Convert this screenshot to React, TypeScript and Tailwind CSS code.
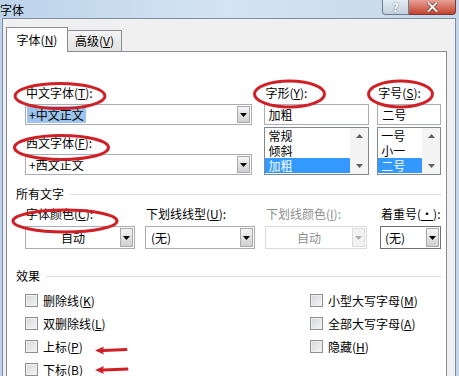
const cjk = "font-['Microsoft_YaHei','Noto_Sans_CJK_SC',sans-serif]"

function Arrow({ disabled = false }: { disabled?: boolean }) {
  return (
    <span
      className={
        disabled
          ? "flex h-full w-[13px] items-center justify-center border border-[#dcdcdc] bg-[#f2f2f2]"
          : "flex h-full w-[13px] items-center justify-center border border-[#a9a9a9] bg-linear-to-b from-[#f5f5f5] to-[#cfcfcf]"
      }
    >
      <svg width="7" height="4" viewBox="0 0 7 4">
        <path d="M0 0h7L3.5 4z" fill={disabled ? "#b0b0b0" : "#000"} />
      </svg>
    </span>
  )
}

function Label({ text, k, tail = ":", gray = false }: { text: string; k: string; tail?: string; gray?: boolean }) {
  return (
    <div className={`h-4 pl-px text-[12px] leading-4 ${gray ? "text-[#8d8d8d]" : "text-black"}`}>
      {text}(<u>{k}</u>){tail}
    </div>
  )
}

function Scroll() {
  return (
    <div className="flex w-[18px] flex-col items-center justify-between bg-[#f4f4f4] py-[6px]">
      <svg width="7" height="4" viewBox="0 0 7 4">
        <path d="M0 4h7L3.5 0z" fill="#606060" />
      </svg>
      <svg width="7" height="4" viewBox="0 0 7 4">
        <path d="M0 0h7L3.5 4z" fill="#606060" />
      </svg>
    </div>
  )
}

function ListBox({ items, sel }: { items: string[]; sel: number }) {
  return (
    <div className="mt-[2px] flex h-[48px] border border-[#828790] bg-white">
      <div className="flex flex-1 flex-col">
        {items.map((it, i) => (
          <div
            key={it}
            className={`flex h-[15px] items-center overflow-hidden pl-[3px] text-[12px] leading-[14px] ${i === sel ? "bg-[#3399ff] text-white" : "text-black"}`}
          >
            {it}
          </div>
        ))}
      </div>
      <Scroll />
    </div>
  )
}

function Check({ text, k }: { text: string; k: string }) {
  return (
    <div className="flex h-[23px] items-center">
      <span className="h-[13px] w-[13px] border border-[#8e8f8f] bg-linear-to-br from-[#d4d6d9] to-[#f6f6f6] shadow-[inset_0_0_0_1px_#f0f0f0]" />
      <span className="ml-[5px] text-[12px] leading-4 text-black">
        {text}(<u>{k}</u>)
      </span>
    </div>
  )
}

export default function App() {
  return (
    <div className={`relative flex h-[376px] w-[459px] flex-col overflow-hidden bg-linear-to-r from-[#bcd3ea] via-[#d5e4f3] to-[#c4d6e8] ${cjk}`}>
      <div className="flex h-[24px] items-start">
        <div className="mt-[2px] text-[12px] leading-4 text-black">字体</div>
        <div className="ml-auto mr-[3px] flex h-[15px]">
          <div className="flex w-[27px] items-center justify-center rounded-bl-[4px] border border-t-0 border-[#6e7f93] bg-linear-to-b from-[#e3ebf4] to-[#c2d0de] text-[11px] font-bold leading-none text-white [text-shadow:0_0_2px_#4a5a6c]">
            ?
          </div>
          <div className="flex w-[47px] items-center justify-center rounded-br-[4px] border border-l-0 border-t-0 border-[#7a3a34] bg-linear-to-b from-[#e5a096] to-[#c5402f]">
            <svg width="11" height="10" viewBox="0 0 11 10">
              <path d="M1.5 1 L9.5 9 M9.5 1 L1.5 9" stroke="#6a1a10" strokeWidth="3.2" strokeLinecap="square" />
              <path d="M1.5 1 L9.5 9 M9.5 1 L1.5 9" stroke="#fff" strokeWidth="2" strokeLinecap="square" />
            </svg>
          </div>
        </div>
      </div>

      <div className="ml-[2px] mr-[3px] flex-1 border border-b-0 border-[#7d8ea3] bg-[#f0f0f0] pl-[3px] pt-[8px]">
        <div className="flex h-[24px] items-end">
          <div className="relative z-10 -mb-px flex h-[25px] w-[62px] items-center justify-center border border-b-0 border-[#898c95] bg-white text-[12px] text-black">
            字体(<u>N</u>)
          </div>
          <div className="flex h-[21px] w-[54px] items-center justify-center border border-b-0 border-l-0 border-[#898c95] bg-linear-to-b from-[#f3f3f3] to-[#e3e3e3] text-[12px] text-black">
            高级(<u>V</u>)
          </div>
        </div>

        <div className="h-[400px] w-[441px] border border-[#898c95] bg-white pl-[9px] pr-[5px] pt-[33px]">
          <div className="ml-[9px] flex">
            <div className="w-[228px]">
              <Label text="中文字体" k="T" />
              <div className="mt-[3px] flex h-[21px] items-center border border-[#abadb3] bg-white pl-px pr-px">
                <span className="bg-[#9cc4ec] px-[2px] text-[12px] leading-[17px] text-black">+中文正文</span>
                <span className="ml-auto h-[19px] py-px">
                  <Arrow />
                </span>
              </div>
              <div className="mt-[10px]">
                <Label text="西文字体" k="F" />
              </div>
              <div className="mt-[3px] flex h-[21px] items-center border border-[#abadb3] bg-white pl-[3px] pr-px">
                <span className="text-[12px] leading-[17px] text-black">+西文正文</span>
                <span className="ml-auto h-[19px] py-px">
                  <Arrow />
                </span>
              </div>
            </div>
            <div className="ml-[12px] w-[105px]">
              <Label text="字形" k="Y" />
              <div className="mt-[3px] flex h-[21px] items-center border border-[#abadb3] bg-white pl-[3px] text-[12px] text-black">
                加粗
              </div>
              <ListBox items={["常规", "倾斜", "加粗"]} sel={2} />
            </div>
            <div className="ml-[8px] w-[64px]">
              <Label text="字号" k="S" />
              <div className="mt-[3px] flex h-[21px] items-center border border-[#abadb3] bg-white pl-[4px] text-[12px] text-black">
                二号
              </div>
              <ListBox items={["一号", "小一", "二号"]} sel={2} />
            </div>
          </div>

          <div className="mt-[11px] flex h-4 items-center">
            <span className="text-[12px] leading-4 text-black">所有文字</span>
            <span className="ml-[6px] h-px flex-1 bg-[#dcdcdc]" />
          </div>

          <div className="ml-[9px] mt-[4px] flex">
            <div className="w-[110px]">
              <Label text="字体颜色" k="C" />
              <div className="mt-[4px] flex h-[23px] items-center border border-[#abadb3] bg-white py-px pr-px">
                <span className="flex-1 text-center text-[12px] text-black">自动</span>
                <Arrow />
              </div>
            </div>
            <div className="ml-[10px] w-[110px]">
              <Label text="下划线线型" k="U" />
              <div className="mt-[4px] flex h-[23px] items-center border border-[#abadb3] bg-white py-px pl-[5px] pr-px">
                <span className="flex-1 text-[12px] text-black">(无)</span>
                <Arrow />
              </div>
            </div>
            <div className="ml-[10px] w-[102px]">
              <Label text="下划线颜色" k="I" gray />
              <div className="mt-[4px] flex h-[23px] items-center border border-[#d9d9d9] bg-white py-px pr-px">
                <span className="flex-1 text-center text-[12px] text-[#8d8d8d]">自动</span>
                <Arrow disabled />
              </div>
            </div>
            <div className="ml-[13px] w-[61px]">
              <div className="h-4 pl-px text-[12px] leading-4 text-black">
                着重号(<u>·</u>):
              </div>
              <div className="mt-[4px] flex h-[23px] items-center border border-[#707070] bg-white py-px pl-[4px] pr-px">
                <span className="flex-1 text-[12px] text-black">(无)</span>
                <Arrow />
              </div>
            </div>
          </div>

          <div className="mt-[19px] flex h-4 items-center">
            <span className="text-[12px] leading-4 text-black">效果</span>
            <span className="ml-[6px] h-px flex-1 bg-[#dcdcdc]" />
          </div>

          <div className="ml-[9px] mt-[5px] flex">
            <div className="w-[285px]">
              <Check text="删除线" k="K" />
              <Check text="双删除线" k="L" />
              <Check text="上标" k="P" />
              <Check text="下标" k="B" />
            </div>
            <div>
              <Check text="小型大写字母" k="M" />
              <Check text="全部大写字母" k="A" />
              <Check text="隐藏" k="H" />
            </div>
          </div>
        </div>
      </div>

      <svg className="pointer-events-none absolute inset-0" width="459" height="376" viewBox="0 0 459 376">
        <g fill="none" stroke="#d01f25" strokeWidth="3">
          <ellipse cx="60" cy="96" rx="45" ry="12.5" />
          <ellipse cx="61.5" cy="147.5" rx="47" ry="12" />
          <ellipse cx="65" cy="221" rx="52" ry="11" />
          <ellipse cx="289.5" cy="94" rx="35" ry="13" />
          <ellipse cx="400.5" cy="94" rx="32" ry="13" />
        </g>
        <g fill="#d01f25">
          <path d="M95 350.5 L104 346.5 L103 349 L127 348 L127.5 351 L103 352 L104 354.5 Z" />
          <path d="M95 370 L104 366 L103 368.5 L128 367.5 L128.5 370.5 L103 371.5 L104 374 Z" />
        </g>
      </svg>
    </div>
  )
}
